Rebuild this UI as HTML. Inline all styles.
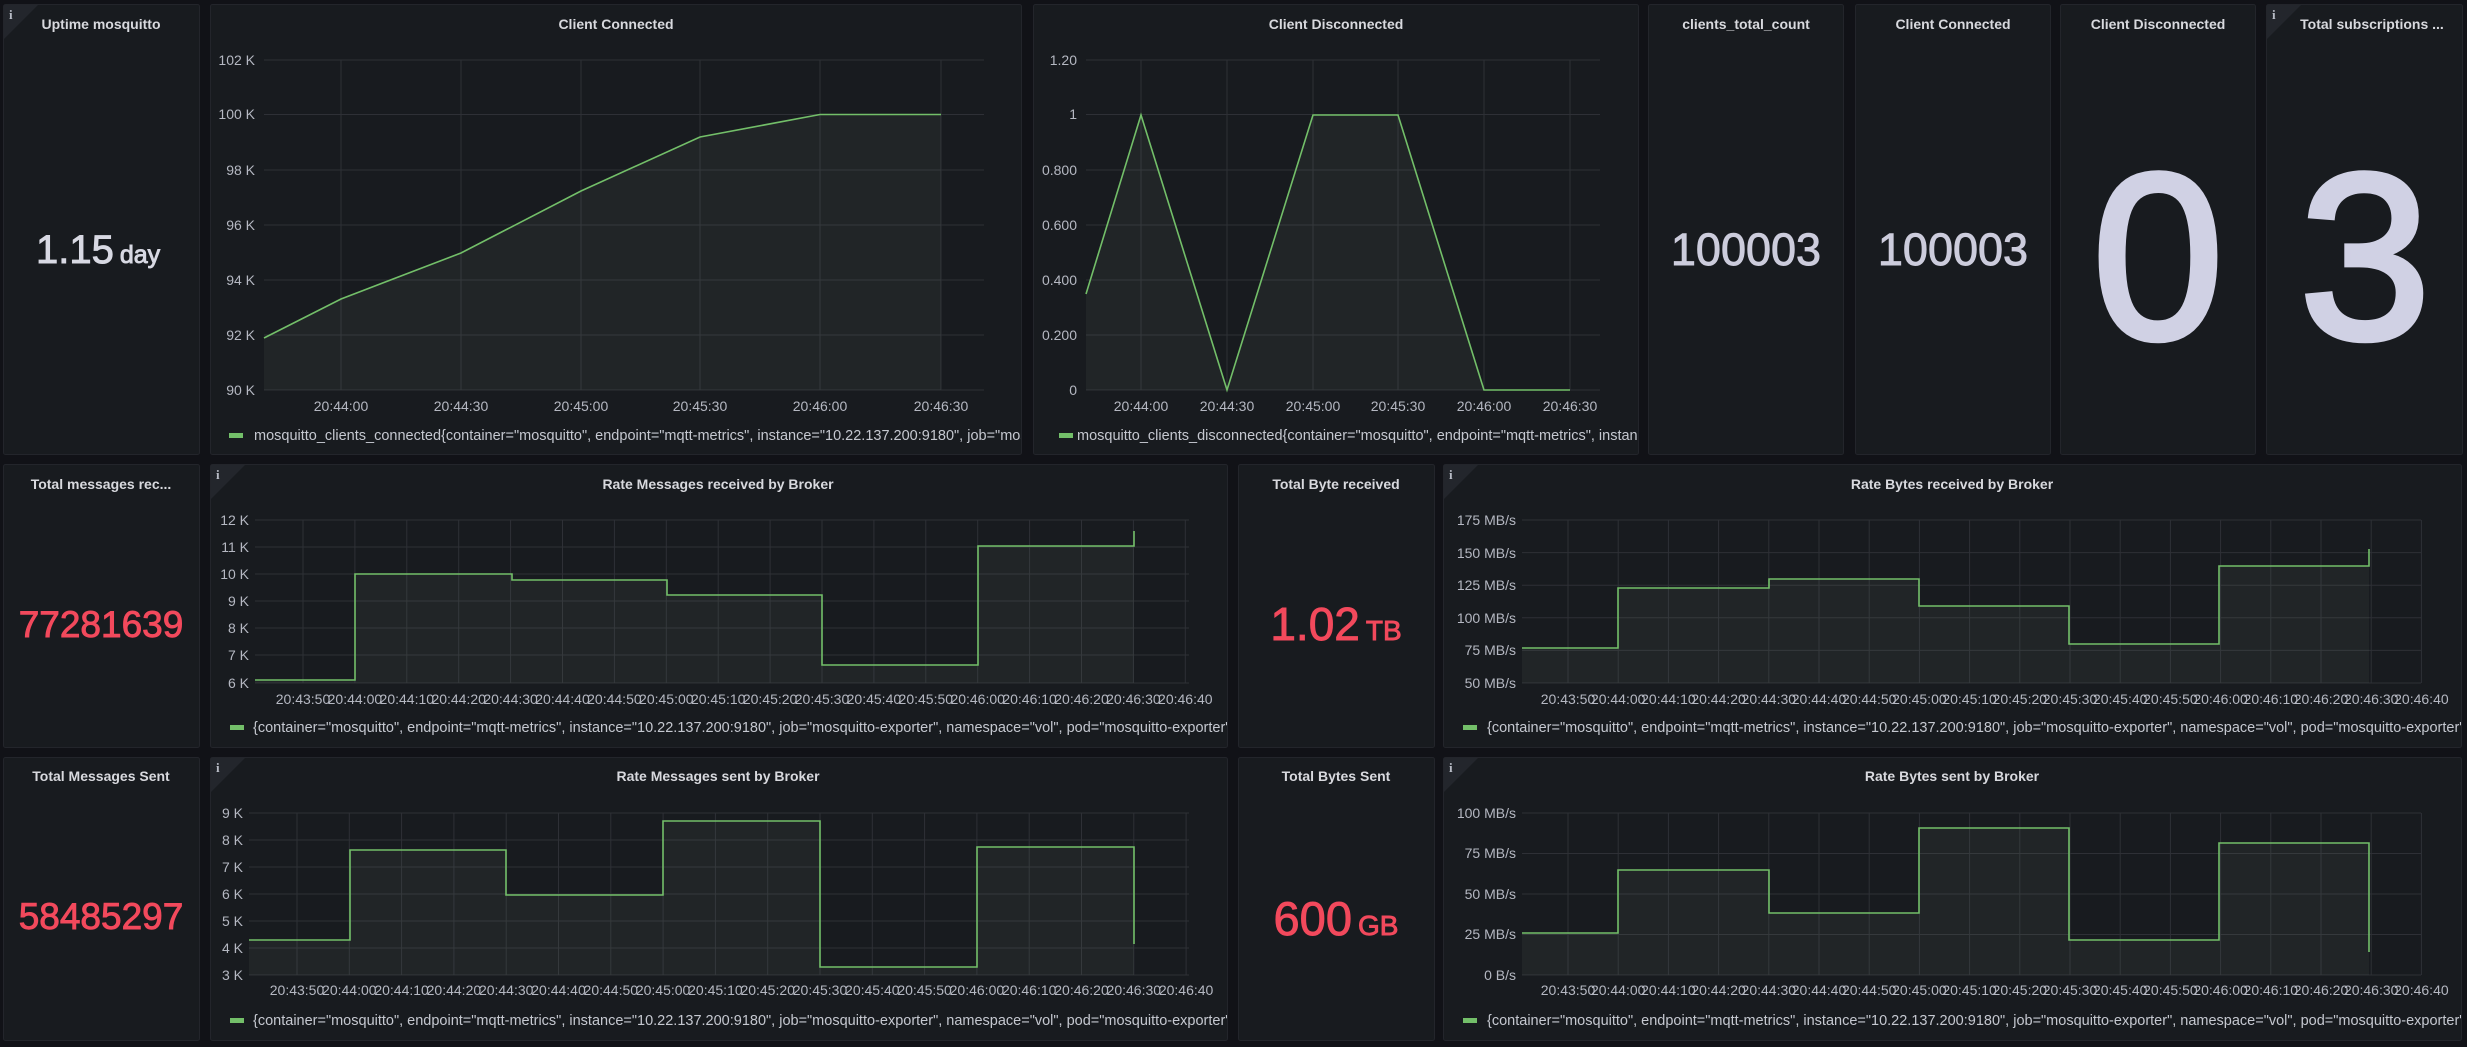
<!DOCTYPE html>
<html><head><meta charset="utf-8"><style>
html,body{margin:0;padding:0;background:#111217;width:2467px;height:1047px;overflow:hidden}
svg{display:block;font-family:"Liberation Sans",sans-serif}
.p{fill:#181b1f;stroke:#23252b;stroke-width:1}
.t{fill:#d8d9de;font-size:14px;font-weight:bold;text-anchor:middle}
.ax{fill:#b5b8c2;font-size:14px}
.r{text-anchor:end}.m{text-anchor:middle}
.g{stroke:#2e3036;stroke-width:1;fill:none}
.ln{stroke:#73bf69;stroke-width:1.6;fill:none}
.fl{fill:#8fa58a;fill-opacity:0.08;stroke:none}
.lg{fill:#c5c8d0;font-size:14.5px}
.ic{fill:#23262c}
.ii{fill:#b8bcc6;font-size:13px;font-weight:bold;font-family:"Liberation Serif",serif}
.sv{stroke-width:0.9;paint-order:stroke}
</style></head><body>
<svg width="2467" height="1047" viewBox="0 0 2467 1047" xmlns="http://www.w3.org/2000/svg">
<defs>
<clipPath id="c1"><rect x="210" y="3" width="811" height="452"/></clipPath>
<clipPath id="c2"><rect x="1033" y="3" width="605" height="452"/></clipPath>
<clipPath id="c3"><rect x="210" y="464" width="1017" height="284"/></clipPath>
<clipPath id="c4"><rect x="1443" y="464" width="1018" height="284"/></clipPath>
<clipPath id="c5"><rect x="210" y="757" width="1017" height="283"/></clipPath>
<clipPath id="c6"><rect x="1443" y="757" width="1018" height="283"/></clipPath>
</defs>
<rect class="p" x="3.5" y="4.5" width="196" height="450" rx="2"/>
<rect class="p" x="210.5" y="4.5" width="811" height="450" rx="2"/>
<rect class="p" x="1033.5" y="4.5" width="605" height="450" rx="2"/>
<rect class="p" x="1648.5" y="4.5" width="195" height="450" rx="2"/>
<rect class="p" x="1855.5" y="4.5" width="195" height="450" rx="2"/>
<rect class="p" x="2060.5" y="4.5" width="195" height="450" rx="2"/>
<rect class="p" x="2266.5" y="4.5" width="196" height="450" rx="2"/>
<rect class="p" x="3.5" y="464.5" width="196" height="283" rx="2"/>
<rect class="p" x="210.5" y="464.5" width="1017" height="283" rx="2"/>
<rect class="p" x="1238.5" y="464.5" width="196" height="283" rx="2"/>
<rect class="p" x="1443.5" y="464.5" width="1018" height="283" rx="2"/>
<rect class="p" x="3.5" y="757.5" width="196" height="283" rx="2"/>
<rect class="p" x="210.5" y="757.5" width="1017" height="283" rx="2"/>
<rect class="p" x="1238.5" y="757.5" width="196" height="283" rx="2"/>
<rect class="p" x="1443.5" y="757.5" width="1018" height="283" rx="2"/>

<polygon class="ic" points="4,5 38,5 4,39"/><text class="ii" x="9" y="19">i</text>
<polygon class="ic" points="2267,5 2301,5 2267,39"/><text class="ii" x="2272" y="19">i</text>
<polygon class="ic" points="211,465 245,465 211,499"/><text class="ii" x="216" y="479">i</text>
<polygon class="ic" points="1444,465 1478,465 1444,499"/><text class="ii" x="1449" y="479">i</text>
<polygon class="ic" points="211,758 245,758 211,792"/><text class="ii" x="216" y="772">i</text>
<polygon class="ic" points="1444,758 1478,758 1444,792"/><text class="ii" x="1449" y="772">i</text>

<text class="t" x="101" y="29">Uptime mosquitto</text>
<text class="t" x="616" y="29">Client Connected</text>
<text class="t" x="1336" y="29">Client Disconnected</text>
<text class="t" x="1746" y="29">clients_total_count</text>
<text class="t" x="1953" y="29">Client Connected</text>
<text class="t" x="2158" y="29">Client Disconnected</text>
<text class="t" x="2372" y="29">Total subscriptions ...</text>
<text class="t" x="101" y="489">Total messages rec...</text>
<text class="t" x="718" y="489">Rate Messages received by Broker</text>
<text class="t" x="1336" y="489">Total Byte received</text>
<text class="t" x="1952" y="489">Rate Bytes received by Broker</text>
<text class="t" x="101" y="781">Total Messages Sent</text>
<text class="t" x="718" y="781">Rate Messages sent by Broker</text>
<text class="t" x="1336" y="781">Total Bytes Sent</text>
<text class="t" x="1952" y="781">Rate Bytes sent by Broker</text>

<text class="sv" x="36" y="263" fill="#d8d9e3" stroke="#d8d9e3" font-size="40">1.15<tspan font-size="25" dx="6">day</tspan></text>
<text class="sv" x="1746" y="265" fill="#ccccdc" stroke="#ccccdc" font-size="45" text-anchor="middle">100003</text>
<text class="sv" x="1953" y="265" fill="#ccccdc" stroke="#ccccdc" font-size="45" text-anchor="middle">100003</text>
<text x="2158" y="338" fill="#d0d1e4" stroke="#d0d1e4" stroke-width="6" font-size="236" text-anchor="middle">0</text>
<text x="2365" y="338" fill="#d0d1e4" stroke="#d0d1e4" stroke-width="6" font-size="236" text-anchor="middle">3</text>
<text class="sv" x="101" y="637" fill="#f2495c" stroke="#f2495c" font-size="37" text-anchor="middle">77281639</text>
<text class="sv" x="101" y="929" fill="#f2495c" stroke="#f2495c" font-size="37" text-anchor="middle">58485297</text>
<text class="sv" x="1336" y="640" fill="#f2495c" stroke="#f2495c" font-size="46" text-anchor="middle">1.02<tspan font-size="28" dx="6">TB</tspan></text>
<text class="sv" x="1336" y="935" fill="#f2495c" stroke="#f2495c" font-size="47" text-anchor="middle">600<tspan font-size="28" dx="6">GB</tspan></text>

<path class="g" d="M264,60H984M264,114.5H984M264,170H984M264,225H984M264,280H984M264,335H984M264,390H984M341,60V390M461,60V390M581,60V390M700,60V390M820,60V390M941,60V390"/>
<path class="fl" d="M264,338L341,299L461,253L581,191L700,137L820,114.5L941,114.5V390H264Z"/>
<path class="ln" d="M264,338L341,299L461,253L581,191L700,137L820,114.5L941,114.5"/>
<g class="ax r"><text x="255" y="65">102 K</text><text x="255" y="119">100 K</text><text x="255" y="175">98 K</text><text x="255" y="230">96 K</text><text x="255" y="285">94 K</text><text x="255" y="340">92 K</text><text x="255" y="395">90 K</text></g>
<g class="ax m"><text x="341" y="411">20:44:00</text><text x="461" y="411">20:44:30</text><text x="581" y="411">20:45:00</text><text x="700" y="411">20:45:30</text><text x="820" y="411">20:46:00</text><text x="941" y="411">20:46:30</text></g>
<g clip-path="url(#c1)"><rect x="229" y="433" width="14" height="5" fill="#73bf69"/><text class="lg" x="254" y="440">mosquitto_clients_connected{container="mosquitto", endpoint="mqtt-metrics", instance="10.22.137.200:9180", job="mosquitto-exporter"}</text></g>

<path class="g" d="M1086,60H1600M1086,114.5H1600M1086,170H1600M1086,225H1600M1086,280H1600M1086,335H1600M1086,390H1600M1141,60V390M1227,60V390M1313,60V390M1398,60V390M1484,60V390M1570,60V390"/>
<path class="fl" d="M1086,294L1141,115L1227,390L1313,115L1398,115L1484,390L1570,390V390H1086Z"/>
<path class="ln" d="M1086,294L1141,115L1227,390L1313,115L1398,115L1484,390L1570,390"/>
<g class="ax r"><text x="1077" y="65">1.20</text><text x="1077" y="119">1</text><text x="1077" y="175">0.800</text><text x="1077" y="230">0.600</text><text x="1077" y="285">0.400</text><text x="1077" y="340">0.200</text><text x="1077" y="395">0</text></g>
<g class="ax m"><text x="1141" y="411">20:44:00</text><text x="1227" y="411">20:44:30</text><text x="1313" y="411">20:45:00</text><text x="1398" y="411">20:45:30</text><text x="1484" y="411">20:46:00</text><text x="1570" y="411">20:46:30</text></g>
<g clip-path="url(#c2)"><rect x="1059" y="433" width="14" height="5" fill="#73bf69"/><text class="lg" x="1077" y="440">mosquitto_clients_disconnected{container="mosquitto", endpoint="mqtt-metrics", instance="10.22.137.200:9180"}</text></g>

<path class="g" d="M255,520H1189M255,547H1189M255,574H1189M255,601H1189M255,628H1189M255,655H1189M255,683H1189M303,520V683M354.9,520V683M406.8,520V683M458.7,520V683M510.6,520V683M562.5,520V683M614.4,520V683M666.3,520V683M718.2,520V683M770.1,520V683M822,520V683M873.9,520V683M925.8,520V683M977.7,520V683M1029.6,520V683M1081.5,520V683M1133.4,520V683M1185.3,520V683"/>
<path class="fl" d="M255,680H355V574H512V580H667V595H822V665H978V546H1134V683H255Z"/>
<path class="ln" d="M255,680H355V574H512V580H667V595H822V665H978V546H1134V531"/>
<g class="ax r"><text x="249" y="525">12 K</text><text x="249" y="552">11 K</text><text x="249" y="579">10 K</text><text x="249" y="606">9 K</text><text x="249" y="633">8 K</text><text x="249" y="660">7 K</text><text x="249" y="688">6 K</text></g>
<g class="ax m"><text x="303" y="704">20:43:50</text><text x="354.9" y="704">20:44:00</text><text x="406.8" y="704">20:44:10</text><text x="458.7" y="704">20:44:20</text><text x="510.6" y="704">20:44:30</text><text x="562.5" y="704">20:44:40</text><text x="614.4" y="704">20:44:50</text><text x="666.3" y="704">20:45:00</text><text x="718.2" y="704">20:45:10</text><text x="770.1" y="704">20:45:20</text><text x="822" y="704">20:45:30</text><text x="873.9" y="704">20:45:40</text><text x="925.8" y="704">20:45:50</text><text x="977.7" y="704">20:46:00</text><text x="1029.6" y="704">20:46:10</text><text x="1081.5" y="704">20:46:20</text><text x="1133.4" y="704">20:46:30</text><text x="1185.3" y="704">20:46:40</text></g>
<g clip-path="url(#c3)"><rect x="230" y="725" width="14" height="5" fill="#73bf69"/><text class="lg" x="253" y="732">{container="mosquitto", endpoint="mqtt-metrics", instance="10.22.137.200:9180", job="mosquitto-exporter", namespace="vol", pod="mosquitto-exporter"}</text></g>

<path class="g" d="M1522,520H2421M1522,552.6H2421M1522,585.2H2421M1522,617.8H2421M1522,650.4H2421M1522,683H2421M1568,520V683M1618.2,520V683M1668.4,520V683M1718.6,520V683M1768.8,520V683M1819,520V683M1869.2,520V683M1919.4,520V683M1969.6,520V683M2019.8,520V683M2070,520V683M2120.2,520V683M2170.4,520V683M2220.6,520V683M2270.8,520V683M2321,520V683M2371.2,520V683M2421.4,520V683"/>
<path class="fl" d="M1522,648H1618V588H1769V579H1919V606H2069V644H2219V566H2369V683H1522Z"/>
<path class="ln" d="M1522,648H1618V588H1769V579H1919V606H2069V644H2219V566H2369V549"/>
<g class="ax r"><text x="1516" y="525">175 MB/s</text><text x="1516" y="558">150 MB/s</text><text x="1516" y="590">125 MB/s</text><text x="1516" y="623">100 MB/s</text><text x="1516" y="655">75 MB/s</text><text x="1516" y="688">50 MB/s</text></g>
<g class="ax m"><text x="1568" y="704">20:43:50</text><text x="1618.2" y="704">20:44:00</text><text x="1668.4" y="704">20:44:10</text><text x="1718.6" y="704">20:44:20</text><text x="1768.8" y="704">20:44:30</text><text x="1819" y="704">20:44:40</text><text x="1869.2" y="704">20:44:50</text><text x="1919.4" y="704">20:45:00</text><text x="1969.6" y="704">20:45:10</text><text x="2019.8" y="704">20:45:20</text><text x="2070" y="704">20:45:30</text><text x="2120.2" y="704">20:45:40</text><text x="2170.4" y="704">20:45:50</text><text x="2220.6" y="704">20:46:00</text><text x="2270.8" y="704">20:46:10</text><text x="2321" y="704">20:46:20</text><text x="2371.2" y="704">20:46:30</text><text x="2421.4" y="704">20:46:40</text></g>
<g clip-path="url(#c4)"><rect x="1463" y="725" width="14" height="5" fill="#73bf69"/><text class="lg" x="1487" y="732">{container="mosquitto", endpoint="mqtt-metrics", instance="10.22.137.200:9180", job="mosquitto-exporter", namespace="vol", pod="mosquitto-exporter"}</text></g>

<path class="g" d="M249,813H1189M249,840H1189M249,867H1189M249,894H1189M249,921H1189M249,948H1189M249,975H1189M297,813V975M349.3,813V975M401.6,813V975M453.9,813V975M506.2,813V975M558.5,813V975M610.8,813V975M663.1,813V975M715.4,813V975M767.7,813V975M820,813V975M872.3,813V975M924.6,813V975M976.9,813V975M1029.2,813V975M1081.5,813V975M1133.8,813V975M1186.1,813V975"/>
<path class="fl" d="M249,940H350V850H506V895H663V821H820V967H977V847H1134V975H249Z"/>
<path class="ln" d="M249,940H350V850H506V895H663V821H820V967H977V847H1134V944"/>
<g class="ax r"><text x="243" y="818">9 K</text><text x="243" y="845">8 K</text><text x="243" y="872">7 K</text><text x="243" y="899">6 K</text><text x="243" y="926">5 K</text><text x="243" y="953">4 K</text><text x="243" y="980">3 K</text></g>
<g class="ax m"><text x="297" y="995">20:43:50</text><text x="349.3" y="995">20:44:00</text><text x="401.6" y="995">20:44:10</text><text x="453.9" y="995">20:44:20</text><text x="506.2" y="995">20:44:30</text><text x="558.5" y="995">20:44:40</text><text x="610.8" y="995">20:44:50</text><text x="663.1" y="995">20:45:00</text><text x="715.4" y="995">20:45:10</text><text x="767.7" y="995">20:45:20</text><text x="820" y="995">20:45:30</text><text x="872.3" y="995">20:45:40</text><text x="924.6" y="995">20:45:50</text><text x="976.9" y="995">20:46:00</text><text x="1029.2" y="995">20:46:10</text><text x="1081.5" y="995">20:46:20</text><text x="1133.8" y="995">20:46:30</text><text x="1186.1" y="995">20:46:40</text></g>
<g clip-path="url(#c5)"><rect x="230" y="1018" width="14" height="5" fill="#73bf69"/><text class="lg" x="253" y="1025">{container="mosquitto", endpoint="mqtt-metrics", instance="10.22.137.200:9180", job="mosquitto-exporter", namespace="vol", pod="mosquitto-exporter"}</text></g>

<path class="g" d="M1522,813H2421M1522,853.5H2421M1522,894H2421M1522,934.5H2421M1522,975H2421M1568,813V975M1618.2,813V975M1668.4,813V975M1718.6,813V975M1768.8,813V975M1819,813V975M1869.2,813V975M1919.4,813V975M1969.6,813V975M2019.8,813V975M2070,813V975M2120.2,813V975M2170.4,813V975M2220.6,813V975M2270.8,813V975M2321,813V975M2371.2,813V975M2421.4,813V975"/>
<path class="fl" d="M1522,933H1618V870H1769V913H1919V828H2069V940H2219V843H2369V975H1522Z"/>
<path class="ln" d="M1522,933H1618V870H1769V913H1919V828H2069V940H2219V843H2369V952"/>
<g class="ax r"><text x="1516" y="818">100 MB/s</text><text x="1516" y="858">75 MB/s</text><text x="1516" y="899">50 MB/s</text><text x="1516" y="939">25 MB/s</text><text x="1516" y="980">0 B/s</text></g>
<g class="ax m"><text x="1568" y="995">20:43:50</text><text x="1618.2" y="995">20:44:00</text><text x="1668.4" y="995">20:44:10</text><text x="1718.6" y="995">20:44:20</text><text x="1768.8" y="995">20:44:30</text><text x="1819" y="995">20:44:40</text><text x="1869.2" y="995">20:44:50</text><text x="1919.4" y="995">20:45:00</text><text x="1969.6" y="995">20:45:10</text><text x="2019.8" y="995">20:45:20</text><text x="2070" y="995">20:45:30</text><text x="2120.2" y="995">20:45:40</text><text x="2170.4" y="995">20:45:50</text><text x="2220.6" y="995">20:46:00</text><text x="2270.8" y="995">20:46:10</text><text x="2321" y="995">20:46:20</text><text x="2371.2" y="995">20:46:30</text><text x="2421.4" y="995">20:46:40</text></g>
<g clip-path="url(#c6)"><rect x="1463" y="1018" width="14" height="5" fill="#73bf69"/><text class="lg" x="1487" y="1025">{container="mosquitto", endpoint="mqtt-metrics", instance="10.22.137.200:9180", job="mosquitto-exporter", namespace="vol", pod="mosquitto-exporter"}</text></g>
</svg>
</body></html>
